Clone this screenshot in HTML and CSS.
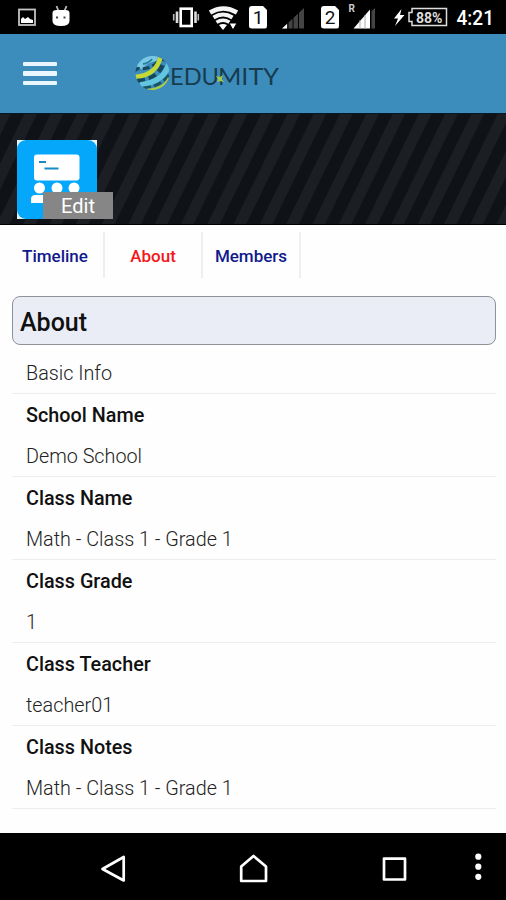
FILE: index.html
```html
<!DOCTYPE html>
<html lang="en">
<head>
  <meta charset="UTF-8">
  <meta name="viewport" content="width=device-width, initial-scale=1.0">
  <title>Edumity - About</title>
  <link rel="stylesheet" href="styles.css">
</head>
<body>
  <div class="status-bar">
    <svg class="status-icons" width="506" height="34" viewBox="0 0 506 34">
      <!-- notifications -->
      <rect x="19" y="9.500" width="16" height="15.500" fill="none" stroke="#c4c4c4" stroke-width="1.800"/>
      <path d="M21 23v-4l2-2 2 2 3-2 2 2 3 1v3z" fill="#fff"/>
      <path d="M56.500 6l2 5M66.500 6l-2 5" stroke="#bbb" stroke-width="1.800"/>
      <path d="M52.500 13q0-3 4-3h9q4 0 4 3v8q0 5-8.500 5t-8.500-5z" fill="#fff"/>
      <path d="M56 17.500h2M63.500 17.500h2" stroke="#444" stroke-width="1.800"/>
      <!-- vibrate -->
      <rect x="180.700" y="8.700" width="11" height="17.300" fill="none" stroke="#fff" stroke-width="2.600"/>
      <path d="M177 11.500v11.500M195.500 11.500v11.500" stroke="#ddd" stroke-width="2.600"/>
      <path d="M173.700 14v6.500M198.300 14v6.500" stroke="#bbb" stroke-width="1.600"/>
      <!-- wifi -->
      <g fill="none" stroke="#f4f4f4">
        <path d="M210 12.500q13.500-8 27 0" stroke-width="4.500"/>
        <path d="M213.500 17.500q9.500-6 19 0" stroke-width="4"/>
        <path d="M216.500 22.200q6.500-4 13 0" stroke-width="3.600"/>
      </g>
      <path d="M219 25q4-2 8 0l-4 5z" fill="#fff"/>
      <path d="M229 23h8l-4 7z" fill="#fff" stroke="#000"/>
      <!-- first sim -->
      <path d="M252 6h11l4 4v16q0 2.500-2 2.500h-13q-3 0-3-2.500V9q0-3 3-3z" fill="#fff"/>
      <path d="M282 28.500L304 8v20.500z" fill="#444"/>
      <path d="M282 28.500l5-4.500v4.500z" fill="#fff"/>
      <path d="M288 9v20M293 9v20M298.500 9v20" stroke="#000"/>
      <!-- second sim -->
      <path d="M324 6h11l4 4v16q0 2.500-2 2.500h-13q-3 0-3-2.500V9q0-3 3-3z" fill="#fff"/>
      <path d="M353.500 28.500l16.500-19v19z" fill="#fff"/>
      <path d="M360 20v9M365 15v14" stroke="#aaa"/>
      <path d="M371.500 11l3.500-3v20.500h-3.500z" fill="#444"/>
      <!-- battery -->
      <path d="M401.500 9l-7.500 9.500h4l-3 7.500 9.500-11h-4.500z" fill="#fff"/>
      <path d="M412 8.500h34.500v17h-34.500v-4h-3v-9h3z" fill="none" stroke="#ddd" stroke-width="1.500"/>
      <text class="sim-number" x="258" y="24">1</text>
      <text class="sim-number" x="330" y="24">2</text>
      <text class="roaming" x="348.500" y="12">R</text>
      <text class="battery-level" x="416" y="22.500" textLength="26.500" lengthAdjust="spacingAndGlyphs">88%</text>
      <text class="clock" x="456.500" y="24.700" textLength="37.500" lengthAdjust="spacingAndGlyphs">4:21</text>
    </svg>
  </div>

  <header class="header">
    <div class="menu-button"><span></span><span></span><span></span></div>
    <svg class="logo" width="148" height="44" viewBox="134 52 148 44">
      <defs>
        <clipPath id="ball"><circle cx="152.500" cy="73" r="17"/></clipPath>
      </defs>
      <g clip-path="url(#ball)" fill="none">
        <path d="M138 67q6-9 20-11" stroke="#79c9e4" stroke-width="9"/>
        <path d="M143 64q6-1 9-5" stroke="#2a7fa0" stroke-width="2"/>
        <path d="M134 72q3-5 7-3 16-1 19-13" stroke="#17485b" stroke-width="3" stroke-dasharray="7 3"/>
        <path d="M134 77q23-1 27-22" stroke="#c5d935" stroke-width="4.500"/>
        <path d="M137 81q23-1 28-23" stroke="#16475a" stroke-width="4.500" stroke-dasharray="8 4"/>
        <path d="M140 85q24-3 29-21" stroke="#62c6e0" stroke-width="5.500"/>
        <path d="M143 88q20-2 27-15" stroke="#1b5361" stroke-width="2.800" stroke-dasharray="8 3"/>
        <path d="M147 90q17-1 22-12" stroke="#b0cc45" stroke-width="2.500"/>
      </g>
      <g class="logo-text">
        <text x="170" y="85" textLength="49" lengthAdjust="spacingAndGlyphs">EDU</text>
        <text x="218" y="85" textLength="61" lengthAdjust="spacingAndGlyphs">MITY</text>
      </g>
      <path d="M216 76l4 1 3-2-1 4 2 3-4-1-3 1 1-3z" fill="#a5c84a"/>
    </svg>
  </header>

  <div class="cover">
    <svg class="stripes" width="506" height="112">
      <defs>
        <pattern id="stripe" width="26.300" height="112" patternUnits="userSpaceOnUse" patternTransform="translate(-2) skewX(-26)">
          <rect width="12.500" height="112" fill="#1b1e23"/>
        </pattern>
      </defs>
      <rect width="506" height="112" fill="#0f1317"/>
      <rect width="506" height="112" fill="url(#stripe)"/>
    </svg>
    <div class="avatar">
      <svg width="80" height="79" viewBox="0 0 80 79">
        <rect width="80" height="79" fill="#e4f4fa"/>
        <rect width="80" height="79" rx="9" fill="#05a7fb"/>
        <rect x="17" y="14.500" width="45.500" height="26" rx="3" fill="#fff"/>
        <path d="M22 22h7M27.500 28.500h14" stroke="#168bc7" stroke-width="2"/>
        <circle cx="22.500" cy="48" r="5.500" fill="#fff"/>
        <circle cx="40" cy="48" r="5.500" fill="#fff"/>
        <circle cx="57" cy="48" r="5.500" fill="#fff"/>
        <path d="M14 63v-5q1-3 4-3h10v8z" fill="#fff"/>
      </svg>
      <div class="edit">Edit</div>
    </div>
  </div>

  <nav class="tabs">
    <div class="tab">Timeline</div>
    <div class="tab active">About</div>
    <div class="tab">Members</div>
  </nav>

  <main class="content">
    <h1>About</h1>
    <div class="row basic"><p>Basic Info</p></div>
    <div class="row">
      <h2>School Name</h2>
      <p>Demo School</p>
    </div>
    <div class="row">
      <h2>Class Name</h2>
      <p>Math - Class 1 - Grade 1</p>
    </div>
    <div class="row">
      <h2>Class Grade</h2>
      <p>1</p>
    </div>
    <div class="row">
      <h2>Class Teacher</h2>
      <p>teacher01</p>
    </div>
    <div class="row">
      <h2>Class Notes</h2>
      <p>Math - Class 1 - Grade 1</p>
    </div>
  </main>

  <footer class="nav-bar">
    <svg width="506" height="67" viewBox="0 833 506 67" fill="none" stroke="#fff" stroke-width="2.700" stroke-linejoin="round">
      <path d="M123.700 857v23.500L102.500 869z"/>
      <path d="M241.200 881v-14.500L253.500 856l12.500 10.500v14.500z"/>
      <rect x="384" y="858.700" width="21" height="20.800"/>
      <g fill="#fff" stroke="none">
        <circle cx="478.300" cy="856.700" r="3.100"/>
        <circle cx="478.300" cy="866.700" r="3.100"/>
        <circle cx="478.300" cy="876.800" r="3.100"/>
      </g>
    </svg>
  </footer>
</body>
</html>
```
FILE: styles.css
```css
* {
  box-sizing: border-box;
}

body {
  margin: 0;
  width: 506px;
  height: 900px;
  display: flex;
  flex-direction: column;
  overflow: hidden;
  background: #fefefe;
  font-family: Roboto, sans-serif;
}

svg {
  display: block;
}

.status-bar {
  height: 34px;
  background: #000;
}

.sim-number {
  font-size: 19px;
  font-weight: 400;
  text-anchor: middle;
  fill: #111;
}

.roaming {
  font-size: 10px;
  font-weight: 700;
  fill: #ccc;
}

.battery-level {
  font-size: 15px;
  font-weight: 700;
  fill: #ddd;
}

.clock {
  font-size: 20px;
  font-weight: 500;
  fill: #fff;
}

.header {
  height: 79px;
  display: flex;
  align-items: center;
  padding-left: 23px;
  background: #3c8dbc;
}

.menu-button {
  width: 34px;
  display: flex;
  flex-direction: column;
  gap: 5px;
}

.menu-button span {
  height: 4.3px;
  border-radius: 1px;
  background: #e9f6ff;
}

.logo {
  margin-left: 77px;
}

.logo-text {
  font-family: Lato, sans-serif;
  font-size: 22.5px;
  fill: #173c4e;
}

.cover {
  position: relative;
  height: 112px;
  border-top: 1px solid #001a2a;
  border-bottom: 1px solid #000;
}

.stripes {
  position: absolute;
  top: 0;
  left: 0;
  height: 110px;
}

.avatar {
  position: relative;
  width: 81px;
  margin: 26px 0 0 17px;
}

.edit {
  position: absolute;
  left: 26px;
  top: 52px;
  width: 70px;
  height: 27px;
  background: #868686;
  color: #fff;
  font-size: 20px;
  line-height: 29px;
  text-align: center;
}

.tabs {
  display: flex;
  height: 54px;
  padding: 7px 0 0 7px;
}

.tab {
  width: 98px;
  height: 46px;
  border-right: 2px solid #eee;
  color: #101a8c;
  font-size: 17px;
  font-weight: 500;
  line-height: 49px;
  text-align: center;
}

.tab.active {
  color: #f5161a;
}

.content {
  flex: 1;
  padding: 17px 10px 0 12px;
}

h1 {
  height: 49px;
  margin: 0;
  padding-left: 7px;
  border: 1.5px solid #8f9397;
  border-radius: 8px;
  background: #eaedf6;
  color: #111;
  font-size: 25px;
  font-weight: 500;
  line-height: 51px;
}

.row {
  height: 83px;
  padding: 2px 14px 0;
  border-bottom: 1px solid #ebedee;
}

.row.basic {
  height: 49px;
  padding-top: 9px;
}

h2,
p {
  margin: 0;
  font-size: 19.8px;
  line-height: 40px;
}

h2 {
  height: 41px;
  color: #111;
  font-weight: 500;
}

p {
  color: #222;
  font-weight: 300;
}

.nav-bar {
  height: 67px;
  background: #000;
}
```
